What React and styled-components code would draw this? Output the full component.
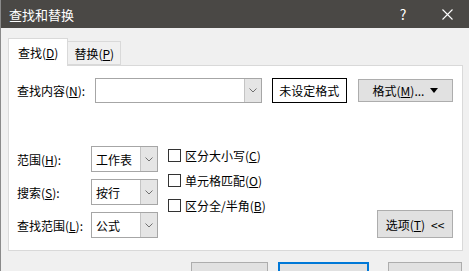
import styled, { createGlobalStyle } from "styled-components";

const GlobalStyle = createGlobalStyle`
    body {
        margin: 0;
        background: #f0f0f0;
        font-family: "Noto Sans CJK SC", "Noto Sans", sans-serif;
        font-size: 12px;
        color: #000;
    }
`;

const Window = styled.div`
    width: 469px;
    height: 271px;
    overflow: hidden;
    background: #f0f0f0;
    border-left: 1px solid #8a8a8a;
    box-sizing: border-box;
    display: flex;
    flex-direction: column;
`;

const TitleBar = styled.div`
    height: 28px;
    flex-shrink: 0;
    background: #4a4845;
    color: #fff;
    display: flex;
    align-items: center;
    padding-left: 8px;
    font-size: 13px;
`;

const TitleText = styled.div`
    flex: 1;
`;

const TitleButton = styled.div`
    width: 44px;
    height: 28px;
    display: flex;
    align-items: center;
    justify-content: center;
    font-size: ${(p) => p.$size || 13}px;
`;

const Body = styled.div`
    padding: 10px 0 0 7px;
`;

const Tabs = styled.div`
    display: flex;
    align-items: flex-end;
    height: 27px;
    position: relative;
    z-index: 1;
`;

const Tab = styled.div`
    box-sizing: border-box;
    height: ${(p) => (p.$active ? 28 : 24)}px;
    margin-bottom: ${(p) => (p.$active ? -1 : 0)}px;
    padding: 0 ${(p) => (p.$active ? 9 : 6)}px;
    display: flex;
    align-items: center;
    background: ${(p) => (p.$active ? "#fff" : "#f0f0f0")};
    border: 1px solid #d9d9d9;
    border-bottom: ${(p) => (p.$active ? "none" : "1px solid #d9d9d9")};
    border-left: ${(p) => (p.$active ? "1px solid #d9d9d9" : "none")};
`;

const Panel = styled.div`
    width: 455px;
    height: 186px;
    box-sizing: border-box;
    background: #fff;
    border: 1px solid #d9d9d9;
    padding: 12px 9px 12px 8px;
    display: flex;
    flex-direction: column;
    justify-content: space-between;
`;

const FindRow = styled.div`
    display: flex;
    align-items: center;
`;

const Label = styled.div`
    width: ${(p) => p.$width}px;
    flex-shrink: 0;
    white-space: nowrap;
`;

const Combo = styled.div`
    box-sizing: border-box;
    width: ${(p) => p.$width}px;
    height: ${(p) => p.$height}px;
    border: 1px solid #a6a6a6;
    background: #fff;
    display: flex;
    align-items: stretch;
`;

const ComboText = styled.div`
    flex: 1;
    display: flex;
    align-items: center;
    padding-left: 4px;
`;

const ComboArrow = styled.div`
    width: 16px;
    background: #e5e5e5;
    border-left: 1px solid #c4c4c4;
    display: flex;
    align-items: center;
    justify-content: center;
`;

const FormatBox = styled.div`
    box-sizing: border-box;
    width: 76px;
    height: 25px;
    margin-left: 10px;
    border: 1px solid #000;
    display: flex;
    align-items: center;
    justify-content: center;
`;

const Button = styled.div`
    box-sizing: border-box;
    width: ${(p) => p.$width}px;
    height: ${(p) => p.$height || 23}px;
    margin-left: ${(p) => p.$ml || 0}px;
    background: #e1e1e1;
    border: 1px solid ${(p) => (p.$primary ? "#0078d7" : "#adadad")};
    box-shadow: ${(p) => (p.$primary ? "inset 0 0 0 1px #0078d7" : "none")};
    display: flex;
    align-items: center;
    justify-content: center;
    gap: 6px;
    flex-shrink: 0;
`;

const Options = styled.div`
    display: flex;
    align-items: flex-end;
`;

const FieldGrid = styled.div`
    display: grid;
    grid-template-columns: 74px 67px;
    row-gap: 7px;
    align-items: center;
`;

const Checks = styled.div`
    display: flex;
    flex-direction: column;
    gap: 10px;
    margin-left: 10px;
    align-self: flex-start;
    margin-top: 2px;
`;

const Check = styled.div`
    display: flex;
    align-items: center;
    gap: 4px;
    height: 15px;
`;

const Box = styled.div`
    width: 11px;
    height: 11px;
    border: 1px solid #333;
    background: #fff;
`;

const Spacer = styled.div`
    flex: 1;
`;

const Footer = styled.div`
    display: flex;
    padding: 11px 0 0 183px;
    gap: 10px;
`;

const Chevron = () => (
    <svg width="8" height="5" viewBox="0 0 8 5">
        <path d="M0.5 0.5 L4 4 L7.5 0.5" fill="none" stroke="#707070" strokeWidth="1" />
    </svg>
);

const Select = ({ children }) => (
    <Combo $width={67} $height={26}>
        <ComboText>{children}</ComboText>
        <ComboArrow>
            <Chevron />
        </ComboArrow>
    </Combo>
);

const CheckItem = ({ children }) => (
    <Check>
        <Box />
        <span>{children}</span>
    </Check>
);

const App = () => {
    return (
        <Window>
            <GlobalStyle />
            <TitleBar>
                <TitleText>查找和替换</TitleText>
                <TitleButton $size={14}>?</TitleButton>
                <TitleButton>
                    <svg width="11" height="11" viewBox="0 0 11 11">
                        <path d="M0.5 0.5 L10.5 10.5 M10.5 0.5 L0.5 10.5" stroke="#fff" strokeWidth="1.1" />
                    </svg>
                </TitleButton>
            </TitleBar>
            <Body>
                <Tabs>
                    <Tab $active><span>查找(<u>D</u>)</span></Tab>
                    <Tab><span>替换(<u>P</u>)</span></Tab>
                </Tabs>
                <Panel>
                    <FindRow>
                        <Label $width={78}>查找内容(<u>N</u>):</Label>
                        <Combo $width={168} $height={25}>
                            <ComboText />
                            <ComboArrow>
                                <Chevron />
                            </ComboArrow>
                        </Combo>
                        <FormatBox>未设定格式</FormatBox>
                        <Button $width={95} $ml={11}>
                            <span>格式(<u>M</u>)...</span>
                            <svg width="8" height="5" viewBox="0 0 8 5">
                                <path d="M0 0 L8 0 L4 5 Z" fill="#000" />
                            </svg>
                        </Button>
                    </FindRow>
                    <Options>
                        <FieldGrid>
                            <Label>范围(<u>H</u>):</Label>
                            <Select>工作表</Select>
                            <Label>搜索(<u>S</u>):</Label>
                            <Select>按行</Select>
                            <Label>查找范围(<u>L</u>):</Label>
                            <Select>公式</Select>
                        </FieldGrid>
                        <Checks>
                            <CheckItem>区分大小写(<u>C</u>)</CheckItem>
                            <CheckItem>单元格匹配(<u>O</u>)</CheckItem>
                            <CheckItem>区分全/半角(<u>B</u>)</CheckItem>
                        </Checks>
                        <Spacer />
                        <Button $width={76} $height={28}>
                            <span>选项(<u>T</u>)</span>
                            <span>&lt;&lt;</span>
                        </Button>
                    </Options>
                </Panel>
                <Footer>
                    <Button $width={77} $height={28} />
                    <Button $width={91} $height={28} $primary />
                    <Button $width={74} $height={28} $ml={9} />
                </Footer>
            </Body>
        </Window>
    );
};

export default App;
